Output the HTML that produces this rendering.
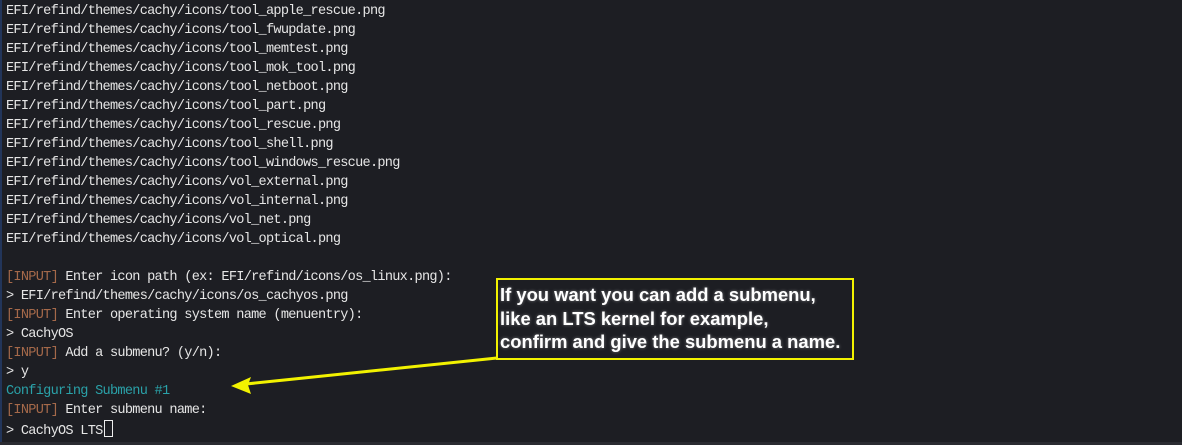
<!DOCTYPE html>
<html><head><meta charset="utf-8"><style>
html,body{margin:0;padding:0}
body{width:1182px;height:445px;background:#1d1e23;position:relative;overflow:hidden}
.lb{position:absolute;left:0;top:0;width:2px;height:445px;background:#22355a}
.bb{position:absolute;left:0;top:442px;width:1182px;height:3px;background:#2a2b31}
pre{position:absolute;left:6px;top:2px;margin:0;font-family:"Liberation Mono",monospace;font-size:13.6px;letter-spacing:-0.73px;line-height:19px;color:#e6e6e6}
.i{color:#a5694a}.c{color:#2aa1a8}
.cur{display:inline-block;width:7px;height:15px;border:1px solid #eee;vertical-align:-3px;margin-left:1px}
.box{position:absolute;left:496px;top:278px;width:354px;height:78px;border:2px solid #f2f200;box-sizing:content-box}
.t{position:absolute;left:500px;top:283px;font-family:"Liberation Sans",sans-serif;font-weight:bold;font-size:18.4px;line-height:23.5px;color:#fff;text-shadow:0 0 3px rgba(255,255,255,.4)}
</style></head><body>
<div class="lb"></div><div class="bb"></div>
<pre>EFI/refind/themes/cachy/icons/tool_apple_rescue.png
EFI/refind/themes/cachy/icons/tool_fwupdate.png
EFI/refind/themes/cachy/icons/tool_memtest.png
EFI/refind/themes/cachy/icons/tool_mok_tool.png
EFI/refind/themes/cachy/icons/tool_netboot.png
EFI/refind/themes/cachy/icons/tool_part.png
EFI/refind/themes/cachy/icons/tool_rescue.png
EFI/refind/themes/cachy/icons/tool_shell.png
EFI/refind/themes/cachy/icons/tool_windows_rescue.png
EFI/refind/themes/cachy/icons/vol_external.png
EFI/refind/themes/cachy/icons/vol_internal.png
EFI/refind/themes/cachy/icons/vol_net.png
EFI/refind/themes/cachy/icons/vol_optical.png

<span class="i">[INPUT]</span> Enter icon path (ex: EFI/refind/icons/os_linux.png):
&gt; EFI/refind/themes/cachy/icons/os_cachyos.png
<span class="i">[INPUT]</span> Enter operating system name (menuentry):
&gt; CachyOS
<span class="i">[INPUT]</span> Add a submenu? (y/n):
&gt; y
<span class="c">Configuring Submenu #1</span>
<span class="i">[INPUT]</span> Enter submenu name:
&gt; CachyOS LTS<span class="cur"></span></pre>
<div class="box"></div>
<div class="t">If you want you can add a submenu,<br>like an LTS kernel for example,<br>confirm and give the submenu a name.</div>
<svg width="1182" height="445" style="position:absolute;left:0;top:0">
<line x1="497" y1="358" x2="246" y2="384" stroke="#f2f200" stroke-width="3"/>
<polygon points="231,386 251,377 248,385 251,394" fill="#f2f200"/>
</svg>
</body></html>
